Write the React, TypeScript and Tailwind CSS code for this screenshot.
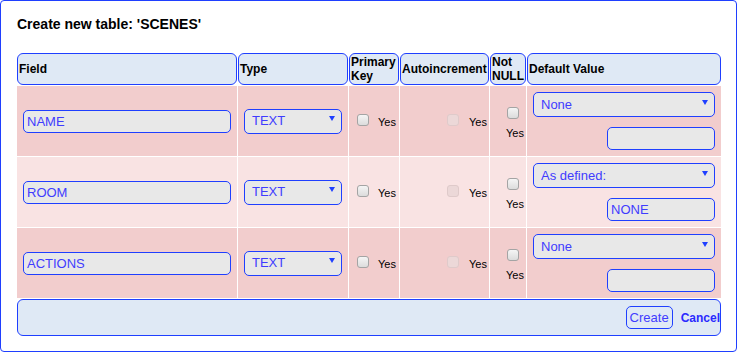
import { useState } from "react";

type Row = { field: string; type: string; def: string; value: string; bg: string };

const initialRows: Row[] = [
  { field: "NAME", type: "TEXT", def: "None", value: "", bg: "bg-[#f2cdcd]" },
  { field: "ROOM", type: "TEXT", def: "As defined:", value: "NONE", bg: "bg-[#f9e3e3]" },
  { field: "ACTIONS", type: "TEXT", def: "None", value: "", bg: "bg-[#f2cdcd]" },
];

function Arrow() {
  return (
    <svg
      className="absolute right-[7px] top-[8px] pointer-events-none"
      width="6"
      height="5"
      viewBox="0 0 6 5"
    >
      <path d="M0 0H6L3 5Z" fill="#1f3fff" />
    </svg>
  );
}

function Check({ disabled = false }: { disabled?: boolean }) {
  return (
    <input
      type="checkbox"
      disabled={disabled}
      className={
        disabled
          ? "appearance-none block w-[12px] h-[12px] rounded-[3px] border border-[#dfcaca] bg-[#ecd8d8]"
          : "appearance-none block w-[12px] h-[12px] rounded-[3px] border border-[#a4a4a4] bg-gradient-to-b from-[#f5f5f5] to-[#dcdcdc]"
      }
    />
  );
}

export default function App() {
  const [rows, setRows] = useState(initialRows);

  function update(i: number, key: keyof Row, v: string) {
    setRows((r) => r.map((row, j) => (j === i ? { ...row, [key]: v } : row)));
  }

  return (
    <div className="w-[737px] h-[352px] border border-[#1f3fff] rounded-[4px] bg-white pl-4 pt-[15px] font-['Liberation_Sans',Arial,sans-serif] text-black">
      <div className="text-[14px] leading-[16px] font-bold">
        Create new table: 'SCENES'
      </div>

      <div className="mt-[21px] grid grid-cols-[220px_110px_50px_89px_36px_194px] grid-rows-[32px_70px_70px_70px_37px] gap-px">
        {/* Header */}
        <div className="border border-[#1f3fff] rounded-[6px] bg-[#dfe9f5] px-px flex items-center text-[12px] leading-[14px] font-bold">
          Field
        </div>
        <div className="border border-[#1f3fff] rounded-[6px] bg-[#dfe9f5] px-px flex items-center text-[12px] leading-[14px] font-bold">
          Type
        </div>
        <div className="border border-[#1f3fff] rounded-[6px] bg-[#dfe9f5] px-px flex items-center text-[12px] leading-[14px] font-bold">
          Primary
          <br />
          Key
        </div>
        <div className="border border-[#1f3fff] rounded-[6px] bg-[#dfe9f5] px-px flex items-center text-[12px] leading-[14px] font-bold whitespace-nowrap">
          Autoincrement
        </div>
        <div className="border border-[#1f3fff] rounded-[6px] bg-[#dfe9f5] px-px flex items-center text-[12px] leading-[14px] font-bold">
          Not
          <br />
          NULL
        </div>
        <div className="border border-[#1f3fff] rounded-[6px] bg-[#dfe9f5] px-px flex items-center text-[12px] leading-[14px] font-bold">
          Default Value
        </div>

        {/* Rows */}
        {rows.map((row, i) => (
          <div key={row.field} className="contents">
            <div className={`${row.bg} px-[6px] flex items-center`}>
              <input
                value={row.field}
                onChange={(e) => update(i, "field", e.target.value)}
                className="w-full h-[23px] border border-[#1f3fff] rounded-[5px] bg-[#e8e8e8] pl-[3px] text-[13px] text-[#3f3cff] outline-none"
              />
            </div>

            <div className={`${row.bg} px-[6px] flex items-center`}>
              <div className="relative w-full">
                <select
                  value={row.type}
                  onChange={(e) => update(i, "type", e.target.value)}
                  className="appearance-none w-full h-[25px] border border-[#1f3fff] rounded-[5px] bg-[#e8e8e8] pl-[7px] text-[13px] text-[#3f3cff] outline-none"
                >
                  <option>TEXT</option>
                  <option>INTEGER</option>
                  <option>REAL</option>
                </select>
                <Arrow />
              </div>
            </div>

            <div className={`${row.bg} pl-[8px] flex items-start text-[11px] leading-[13px]`}>
              <div className="mt-[28px]">
                <Check />
              </div>
              <span className="ml-[9px] mt-[30px]">Yes</span>
            </div>

            <div className={`${row.bg} pr-[2px] flex items-start justify-end text-[11px] leading-[13px]`}>
              <div className="mt-[28px]">
                <Check disabled />
              </div>
              <span className="ml-[10px] mt-[30px]">Yes</span>
            </div>

            <div className={`${row.bg} pr-[2px] pt-[21px] flex flex-col items-end text-[11px] leading-[13px]`}>
              <div className="mr-[5px] mb-[8px]">
                <Check />
              </div>
              <span>Yes</span>
            </div>

            <div className={`${row.bg} px-[6px] pt-[6px] flex flex-col items-end gap-[10px]`}>
              <div className="relative w-full">
                <select
                  value={row.def}
                  onChange={(e) => update(i, "def", e.target.value)}
                  className="appearance-none w-full h-[25px] border border-[#1f3fff] rounded-[5px] bg-[#e8e8e8] pl-[7px] text-[13px] text-[#3f3cff] outline-none"
                >
                  <option>None</option>
                  <option>As defined:</option>
                  <option>NULL</option>
                </select>
                <Arrow />
              </div>
              <input
                value={row.value}
                onChange={(e) => update(i, "value", e.target.value)}
                className="w-[108px] h-[23px] border border-[#1f3fff] rounded-[5px] bg-[#e8e8e8] pl-[3px] text-[13px] text-[#3f3cff] outline-none"
              />
            </div>
          </div>
        ))}

        {/* Footer */}
        <div className="col-span-6 border border-[#1f3fff] rounded-[6px] bg-[#dfe9f5] flex items-center justify-end gap-[8px]">
          <button className="h-[23px] border border-[#1f3fff] rounded-[5px] px-[3px] text-[13px] text-[#3f3cff]">
            Create
          </button>
          <button className="text-[12px] font-bold text-[#2a2aff]">Cancel</button>
        </div>
      </div>
    </div>
  );
}
